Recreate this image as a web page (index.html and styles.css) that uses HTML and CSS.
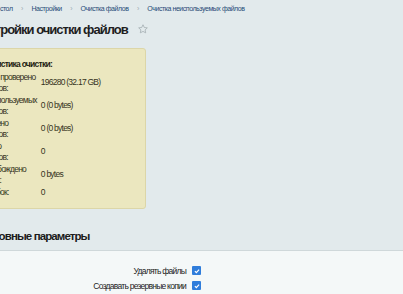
FILE: index.html
```html
<!DOCTYPE html>
<html lang="ru">
<head>
    <meta charset="UTF-8">
    <meta name="viewport" content="width=device-width, initial-scale=1.0">
    <title>Настройки очистки файлов</title>
    <link rel="stylesheet" href="styles.css">
</head>
<body>
<div class="page">

    <!-- Breadcrumbs -->
    <div class="breadcrumbs">
        <a href="#">Рабочий стол</a>
        <span class="sep">›</span>
        <a href="#">Настройки</a>
        <span class="sep">›</span>
        <a href="#">Очистка файлов</a>
        <span class="sep">›</span>
        <a href="#">Очистка неиспользуемых файлов</a>
    </div>

    <!-- Title -->
    <h1 class="title">
        <span>Настройки очистки файлов</span>
        <svg class="star" width="10" height="10" viewBox="0 0 20 20">
            <path d="M10 1.5l2.6 5.5 6 .7-4.4 4.1 1.2 5.9L10 14.8l-5.4 2.9 1.2-5.9L1.4 7.7l6-.7z" fill="none" stroke="#a3adb1" stroke-width="1.6" stroke-linejoin="round"/>
        </svg>
    </h1>

    <!-- Stats box -->
    <div class="info-box">
        <div class="info-title">Статистика очистки:</div>
        <table class="stats">
            <tr>
                <td class="label">Всего проверено<br>файлов:</td>
                <td>196280 (32.17 GB)</td>
            </tr>
            <tr>
                <td class="label">Неиспользуемых<br>файлов:</td>
                <td>0 (0 bytes)</td>
            </tr>
            <tr>
                <td class="label">Удалено<br>файлов:</td>
                <td>0 (0 bytes)</td>
            </tr>
            <tr>
                <td class="label">Сжато<br>файлов:</td>
                <td>0</td>
            </tr>
            <tr>
                <td class="label">Освобождено<br>места:</td>
                <td>0 bytes</td>
            </tr>
            <tr>
                <td class="label">Ошибок:</td>
                <td>0</td>
            </tr>
        </table>
    </div>

    <!-- Settings section -->
    <div class="section-head">Основные параметры</div>
    <div class="section-body">
        <div class="field">
            <label for="del">Удалять файлы</label>
            <span class="check"><svg width="6" height="6" viewBox="0 0 10 10"><path d="M1.5 5.2l2.4 2.4 4.6-5" fill="none" stroke="#fff" stroke-width="2"/></svg></span>
        </div>
        <div class="field">
            <label for="bak">Создавать резервные копии</label>
            <span class="check"><svg width="6" height="6" viewBox="0 0 10 10"><path d="M1.5 5.2l2.4 2.4 4.6-5" fill="none" stroke="#fff" stroke-width="2"/></svg></span>
        </div>
    </div>

</div>
</body>
</html>
```

FILE: styles.css
```css
/* Page base */
body {
    margin: 0;
    padding: 0;
    background-color: #e2eaec;
    font-family: "Liberation Sans", Arial, sans-serif;
    overflow: hidden;
    color: #222;
}

.page {
    margin-left: -26px;
    height: 294px;
    overflow: hidden;
}

/* Breadcrumbs */
.breadcrumbs {
    height: 18px;
    line-height: 18px;
    font-size: 7px;
    letter-spacing: -0.45px;
    white-space: nowrap;
}

.breadcrumbs a {
    color: #284a78;
    text-decoration: none;
}

.breadcrumbs .sep {
    color: #9eabb3;
    margin: 0 7px;
}

/* Title */
.title {
    margin: 0;
    height: 20px;
    line-height: 20px;
    padding-top: 2px;
    font-size: 13px;
    letter-spacing: -1px;
    font-weight: bold;
    color: #1e1e1e;
    white-space: nowrap;
}

.star {
    margin-left: 8px;
    vertical-align: 0;
}

/* Statistics box */
.info-box {
    margin-top: 8px;
    width: 165px;
    padding: 10px 0 10px 5px;
    background-color: #ebe7bf;
    border: 1px solid #dcd6a8;
    border-radius: 3px;
    color: #35331c;
    font-size: 8.5px;
    letter-spacing: -0.75px;
    line-height: 11.5px;
}

.info-title {
    font-weight: bold;
    color: #1f1e12;
    margin-bottom: 1px;
}

.stats {
    border-collapse: collapse;
}

.stats td {
    padding: 0;
    vertical-align: middle;
    white-space: nowrap;
}

.stats td.label {
    width: 51px;
    padding-right: 4px;
}

/* Settings section */
.section-head {
    margin-top: 19px;
    padding: 0 0 6px 5px;
    height: 16px;
    line-height: 16px;
    font-size: 11.5px;
    letter-spacing: -0.9px;
    font-weight: bold;
    color: #1c1c1c;
    border-bottom: 1px solid #cfd8da;
}

.section-body {
    background-color: #f4f8f8;
    padding-top: 12px;
    height: 60px;
}

.field {
    display: grid;
    grid-template-columns: 212px 9px;
    column-gap: 6px;
    align-items: center;
    height: 15px;
    font-size: 8.5px;
    letter-spacing: -0.75px;
    color: #1c1c1c;
}

.field label {
    text-align: right;
}

.check {
    width: 9px;
    height: 9px;
    background-color: #2f7ddb;
    border-radius: 1px;
    display: flex;
    align-items: center;
    justify-content: center;
}
```
